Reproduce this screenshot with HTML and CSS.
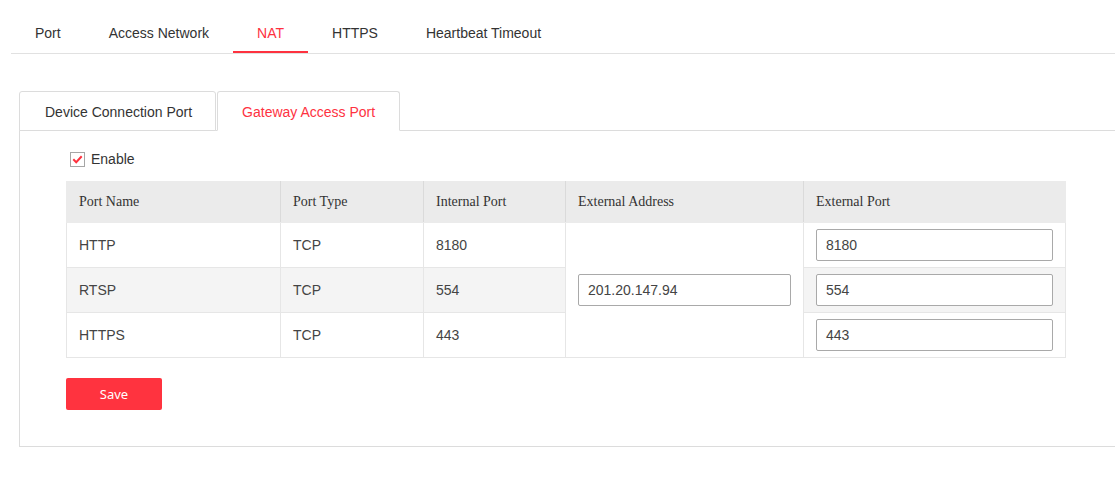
FILE: index.html
```html
<!DOCTYPE html>
<html>
<head>
<meta charset="utf-8">
<link rel="stylesheet" href="styles.css">
</head>
<body>
<nav class="topnav">
  <div class="tab">Port</div>
  <div class="tab">Access Network</div>
  <div class="tab active">NAT</div>
  <div class="tab">HTTPS</div>
  <div class="tab">Heartbeat Timeout</div>
</nav>
<section class="content">
  <div class="subtabs">
    <div class="subtab">Device Connection Port</div>
    <div class="subtab active">Gateway Access Port</div>
  </div>
  <div class="panel">
    <label class="enable">
      <span class="checkbox"><svg width="13" height="13" viewBox="0 0 13 13"><path d="M2.3 6.3 L5.2 9.2 L10.7 3.3" fill="none" stroke="#fe323f" stroke-width="2"/></svg></span>
      <span>Enable</span>
    </label>
    <table class="grid">
      <colgroup>
        <col class="c1"><col class="c2"><col class="c3"><col class="c4"><col class="c5">
      </colgroup>
      <thead>
        <tr><th>Port Name</th><th>Port Type</th><th>Internal Port</th><th>External Address</th><th>External Port</th></tr>
      </thead>
      <tbody>
        <tr>
          <td>HTTP</td><td>TCP</td><td>8180</td>
          <td rowspan="3" class="addr"><div class="input">201.20.147.94</div></td>
          <td class="inp"><div class="input">8180</div></td>
        </tr>
        <tr class="alt">
          <td>RTSP</td><td>TCP</td><td>554</td>
          <td class="inp"><div class="input">554</div></td>
        </tr>
        <tr>
          <td>HTTPS</td><td>TCP</td><td>443</td>
          <td class="inp"><div class="input">443</div></td>
        </tr>
      </tbody>
    </table>
    <button class="save">Save</button>
  </div>
</section>
</body>
</html>
```
FILE: styles.css
```css
html, body {
  margin: 0;
  padding: 0;
  background: #fff;
  overflow: hidden;
}
body {
  font-family: "Liberation Sans", Arial, sans-serif;
  font-size: 14px;
  color: #333;
}
.topnav {
  display: flex;
  margin-left: 11px;
  padding-top: 14px;
  border-bottom: 1px solid #e1e1e1;
}
.tab {
  padding: 0 24px;
  height: 39px;
  line-height: 39px;
  color: #333;
}
.tab.active {
  color: #fe323f;
  box-shadow: inset 0 -2px 0 #fe323f;
}
.content {
  margin: 37px 0 0 19px;
}
.subtabs {
  display: flex;
  position: relative;
  z-index: 1;
}
.subtab {
  box-sizing: border-box;
  height: 40px;
  line-height: 40px;
  padding: 0 23px 0 25px;
  border: 1px solid #dcdcdc;
  border-radius: 3px 3px 0 0;
  background: #fff;
  color: #333;
  margin-right: 1px;
}
.subtab.active {
  color: #fe323f;
  border-bottom-color: #fff;
  padding: 0 24px;
}
.panel {
  margin-top: -1px;
  border: 1px solid #dcdcdc;
  border-right: none;
  padding: 0 0 36px 46px;
}
.enable {
  display: flex;
  align-items: center;
  gap: 6px;
  height: 16px;
  margin: 20px 0 14px 4px;
  color: #333;
}
.checkbox {
  box-sizing: border-box;
  width: 15px;
  height: 15px;
  border: 1px solid #a6a6a6;
  display: flex;
  align-items: center;
  justify-content: center;
}
.grid {
  border-collapse: collapse;
  table-layout: fixed;
  width: 999px;
}
.c1 { width: 214px; }
.c2 { width: 143px; }
.c3 { width: 142px; }
.c4 { width: 238px; }
.c5 { width: 262px; }
.grid th {
  font-family: "Liberation Serif", "Times New Roman", serif;
  font-weight: normal;
  text-align: left;
  background: #ebebeb;
  color: #333;
  height: 40px;
  padding: 0 12px;
  border: 1px solid #ebebeb;
  border-left-color: #dadada;
  border-right-color: #dadada;
}
.grid th:first-child { border-left-color: #ebebeb; }
.grid th:last-child { border-right-color: #ebebeb; }
.grid td {
  height: 44px;
  padding: 0 12px;
  border: 1px solid #e6e6e6;
  color: #444;
}
.grid tr.alt td {
  background: #f4f4f4;
}
.grid td.addr {
  background: #fff;
}
.input {
  box-sizing: border-box;
  height: 32px;
  line-height: 30px;
  border: 1px solid #a9a9a9;
  border-radius: 2px;
  padding: 0 9px;
  background: #fff;
  color: #444;
}
.save {
  display: block;
  margin-top: 20px;
  width: 96px;
  height: 32px;
  border: none;
  border-radius: 2px;
  background: #ff333f;
  color: #fff;
  font-family: "Noto Sans", "Open Sans", sans-serif;
  font-size: 13px;
  padding: 0;
}
```
